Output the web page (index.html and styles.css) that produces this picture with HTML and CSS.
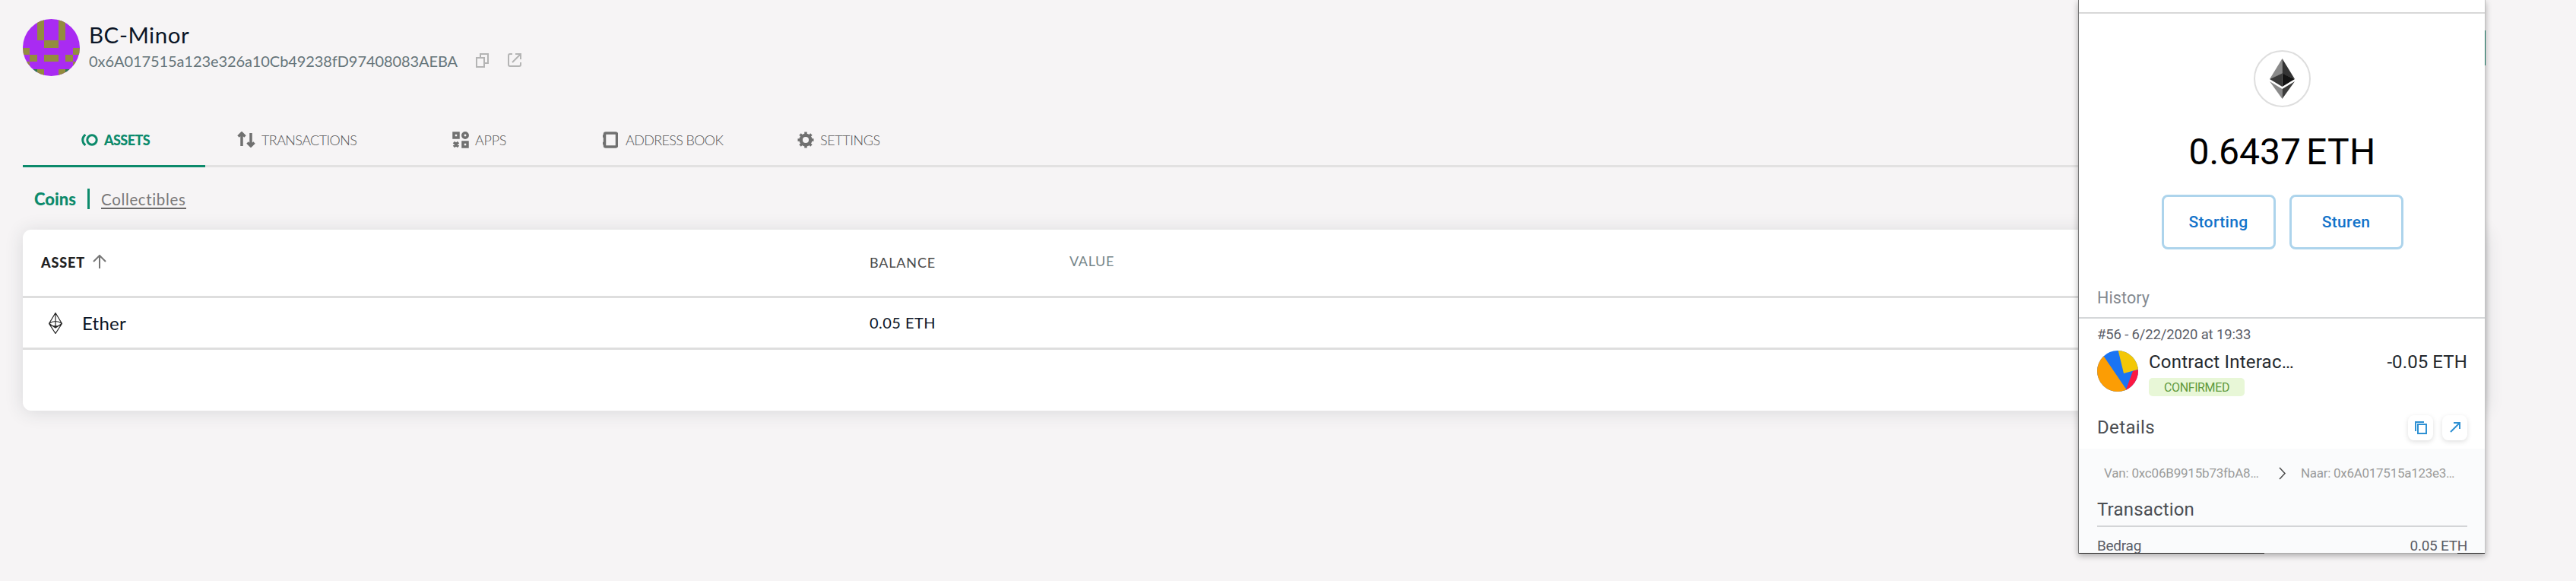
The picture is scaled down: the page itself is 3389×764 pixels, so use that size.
FILE: index.html
```html
<!DOCTYPE html>
<html lang="nl">
<head>
<meta charset="utf-8">
<title>BC-Minor</title>
<link rel="stylesheet" href="styles.css">
</head>
<body>
<main class="page">
  <header class="account">
    <svg class="avatar" viewBox="0 0 8 8"><defs><clipPath id="round"><circle cx="4" cy="4" r="4"/></clipPath></defs><g clip-path="url(#round)" shape-rendering="crispEdges"><path fill="#a92bf2" d="M0 0h8v8H0z"/><path fill="#938c3e" d="M2 0h1v3H2zM5 0h1v3H5zM3 3h2v1H3zM0 4h1v1H0zM7 4h1v1H7zM1 5h1v1H1zM3 5h2v1H3zM6 5h1v1H6zM0 6h1v1H0zM7 6h1v1H7zM2 7h1v1H2zM5 7h1v1H5z"/><path fill="#2f7b4c" d="M0 7h2v1H0zM6 7h2v1H6z"/></g></svg>
    <div class="identity">
      <div class="name">BC-Minor</div>
      <div class="address"><span class="hash">0x6A017515a123e326a10Cb49238fD97408083AEBA</span>
        <svg class="copy" viewBox="0 0 17 19"><path d="M6 5V1h10v12h-4M1 6h10v12H1z"/></svg>
        <svg class="open" viewBox="0 0 18 18"><path d="M6 1H3Q1 1 1 3v12q0 2 2 2h12q2 0 2-2v-3M10 1h7v7M16 2L6 12"/></svg>
      </div>
    </div>
  </header>
  <nav class="tabs">
    <a class="tab active"><svg width="22" height="16" viewBox="0 0 22 16"><path d="M5.500 1.200C0.500 4.500 0.500 11.500 5.500 14.800"/><circle cx="14" cy="8" r="6.200"/></svg><span class="t1">ASSETS</span></a>
    <a class="tab second"><svg width="24" height="21" viewBox="0 0 24 21"><path d="M6 19V2M1.500 6.500L6 2l4.500 4.500M18 2v17M13.500 14.500L18 19l4.500-4.500"/></svg><span class="t2">TRANSACTIONS</span></a>
    <a class="tab third"><svg width="22" height="22" viewBox="0 0 22 22"><path d="M2 2h6v6H2zM14 14h6v6h-6zM2 14l6 6M8 14l-6 6"/><circle cx="17" cy="5" r="3.200"/></svg><span class="t3">APPS</span></a>
    <a class="tab fourth"><svg width="20" height="22" viewBox="0 0 20 22"><path d="M4 2h13q1.500 0 1.500 1.500v15q0 1.500-1.500 1.500H4q-1.500 0-1.500-1.500v-15Q2.500 2 4 2zM0 6h4M0 15.500h4"/></svg><span class="t4">ADDRESS BOOK</span></a>
    <a class="tab fifth"><svg width="22" height="22" viewBox="0 0 22 22"><circle class="ring" cx="11" cy="11" r="6.300"/><path class="teeth" d="M11 .500V4M11 18v3.500M.500 11H4M18 11h3.500M3.600 3.600L6 6M16 16l2.400 2.400M3.600 18.400L6 16M16 6l2.400-2.400"/></svg><span class="t5">SETTINGS</span></a>
  </nav>
  <div class="switch"><b class="coins">Coins</b><i class="bar"></i><a class="collect">Collectibles</a></div>
  <section class="card">
    <div class="row head">
      <div class="c1"><b class="asset">ASSET</b><svg width="18" height="18" viewBox="0 0 18 18"><path d="M9 18V1.500M1 9l8-8 8 8"/></svg></div>
      <div class="c2"><span class="balance">BALANCE</span></div>
      <div class="c3"><span class="value">VALUE</span></div>
    </div>
    <div class="row coin">
      <div class="c1"><svg class="ether" viewBox="0 0 18 28"><path d="M9 .500L17.500 14.500 9 27.500.500 14.500zM9 .500V20M.500 14.500Q9 8.500 17.500 14.500L9 20 .500 14.500M.500 14.500Q9 22 17.500 14.500"/></svg><span class="ethname">Ether</span></div>
      <div class="c2"><span class="amount">0.05 ETH</span></div>
    </div>
  </section>
</main>
<aside class="popup">
  <div class="topbar"></div>
  <div class="summary">
    <div class="token"><svg width="33" height="53" viewBox="0 0 33 53"><path fill="#8a8a8a" d="M16.500 0v20L0 27z"/><path fill="#343434" d="M16.500 0v20L33 27z"/><path fill="#393939" d="M16.500 19.500V37L0 27z"/><path fill="#141414" d="M16.500 19.500V37L33 27z"/><path fill="#8a8a8a" d="M0 30l16.500 10v13z"/><path fill="#3c3c3b" d="M33 30L16.500 40v13z"/></svg></div>
    <div class="total"><span class="num">0.6437</span><span class="unit">ETH</span></div>
    <div class="actions"><button>Storting</button><button>Sturen</button></div>
  </div>
  <div class="history">History</div>
  <div class="tx">
    <div class="date">#56 - 6/22/2020 at 19:33</div>
    <div class="txrow">
      <svg class="blockie" viewBox="0 0 54 54"><defs><clipPath id="disc"><circle cx="27" cy="27" r="27"/></clipPath></defs><g clip-path="url(#disc)"><path fill="#1a74f3" d="M0 0h54v54H0z"/><path fill="#fc9d04" d="M-2-5L9 8 39 52 36 60H-5z"/><path fill="#f3c706" d="M27-3l8 33 22-6V-3z"/><path fill="#fb1942" d="M47 27l10-3v30H37z"/></g></svg>
      <div class="what"><span class="contract">Contract Interac…</span><span class="badge">CONFIRMED</span></div>
      <span class="minus">-0.05 ETH</span>
    </div>
  </div>
  <div class="details"><span class="det">Details</span>
    <div class="tools"><i class="tool"><svg width="16" height="17" viewBox="0 0 16 17"><path d="M4 4h11v12H4zM1 13V1h11"/></svg></i><i class="tool"><svg width="14" height="14" viewBox="0 0 14 14"><path d="M1 13L13 1M5 1h8v8"/></svg></i></div>
  </div>
  <div class="panel">
    <div class="parties"><span class="from">Van: 0xc06B9915b73fbA8…</span><svg width="10" height="17" viewBox="0 0 10 17"><path d="M1 1l7 7.500L1 16"/></svg><span class="to">Naar: 0x6A017515a123e3…</span></div>
    <div class="section">Transaction</div>
    <div class="line"><span class="bed">Bedrag</span><span class="am">0.05 ETH</span></div>
  </div>
  <div class="edge"></div>
</aside>
</body>
</html>
```
FILE: styles.css
```css
* { box-sizing: border-box; }
body { margin: 0; width: 3389px; height: 764px; overflow: hidden; position: relative; background: #f6f4f5; font-family: Lato, "Open Sans", sans-serif; }
svg { display: block; flex: none; fill: none; }
span, b, a { white-space: nowrap; }
.page { padding: 25px 119px 0 30px; }
.account { display: flex; height: 125px; }
.avatar { width: 75px; height: 75px; }
.identity { padding: 4px 0 0 12px; }
.name { font-size: 29.5px; line-height: 34px; letter-spacing: .55px; color: #0b1526; }
.address { display: flex; align-items: center; height: 34px; font-size: 20px; letter-spacing: -.08px; color: #66757a; }
.hash { width: 509px; }
.copy { width: 17px; height: 19px; margin: 0 25px 2px 0; stroke: #b4b4b4; stroke-width: 2; }
.open { width: 18px; height: 18px; margin-bottom: 2px; stroke: #b4b4b4; stroke-width: 2; }
.tabs { display: flex; height: 70px; border-bottom: 3px solid #e2e1e1; }
.tab { display: flex; align-items: center; width: 240px; height: 70px; border-bottom: 3px solid transparent; font-size: 18px; font-weight: 300; color: #555; gap: 8px; }
.tab svg { stroke: #707070; stroke-width: 3.5; }
.tab.active { color: #0c8a6b; border-color: #0c8a6b; font-weight: 900; padding-left: 77px; }
.tab.active svg { stroke: #0c8a6b; stroke-width: 3; }
.t1 { letter-spacing: -.6px; }
.t2 { letter-spacing: -.6px; }
.t3 { letter-spacing: -.25px; }
.t4 { letter-spacing: -.65px; }
.t5 { letter-spacing: -.4px; }
.second { padding-left: 42px; }
.third { padding-left: 85px; }
.fourth { padding-left: 43px; gap: 10px; }
.fifth { padding-left: 59px; }
.tab .ring { stroke-width: 4.5; }
.switch { display: flex; align-items: center; height: 27px; margin: 28px 0 27px; padding-left: 15px; }
.coins { width: 70px; font-size: 22px; color: #0c8a6b; font-weight: 900; }
.bar { width: 3px; height: 27px; background: #0c8a6b; margin-right: 15px; }
.collect { margin-top: 2px; font-size: 20.5px; letter-spacing: .65px; color: #7a7878; line-height: 22px; border-bottom: 2px solid #6a6868; }
.card { height: 238px; background: #fff; border-radius: 11px; box-shadow: 0 2px 24px rgba(40,54,61,.14); }
.row { display: flex; border-bottom: 3px solid #dedede; }
.head { height: 90px; font-size: 18px; }
.coin { height: 68px; color: #0b1526; }
.row > div { display: flex; align-items: center; height: 100%; }
.c1 { width: 1114px; padding-left: 24px; }
.c2 { width: 263px; }
.head .c1, .head .c2 { padding-bottom: 1px; }
.asset { color: #212121; width: 68px; font-weight: 900; letter-spacing: .86px; }
.head svg { stroke: #757575; stroke-width: 2; margin-bottom: 2px; }
.balance { color: #4a4a4a; letter-spacing: .82px; }
.value { color: #76868a; letter-spacing: .64px; padding-bottom: 5px; }
.ether { width: 18px; height: 28px; margin: 0 26px 0 10px; stroke: #222; stroke-width: 1.2; }
.ethname { font-size: 24px; letter-spacing: .25px; padding-bottom: 1px; }
.amount { font-size: 20px; letter-spacing: .46px; padding-bottom: 1px; }
.popup { position: absolute; left: 2734px; top: 0; width: 536px; height: 728px; overflow: hidden; background: #fff; border-left: 1px solid #777; padding-right: 1px; box-shadow: 0 3px 8px rgba(0,0,0,.3); font-family: Roboto, "Open Sans", sans-serif; }
.popup::after { content: ""; position: absolute; right: 0; top: 0; width: 1px; height: 728px; background: linear-gradient(#c0c0c0 40px, #0f6b56 40px 86px, #c4c4c4 86px); }
.topbar { height: 18px; border-bottom: 2px solid #d8d8d8; }
.summary { display: flex; flex-direction: column; align-items: center; height: 336px; padding: 48px 0 0 1px; }
.token { display: flex; align-items: center; justify-content: center; width: 75px; height: 75px; border: 2px solid #dedede; border-radius: 50%; padding-bottom: 1px; }
.total { display: flex; gap: 7px; margin-top: 30px; line-height: 58px; font-size: 48px; color: #000; }
.unit { letter-spacing: .3px; }
.actions { display: flex; gap: 18px; margin-top: 27px; }
.actions button { width: 150px; height: 72px; padding: 0; border: 3px solid #add4ec; border-radius: 8px; background: #fff; color: #1273ca; font: 500 21px/1 Roboto, sans-serif; letter-spacing: .36px; }
.history { height: 65px; padding: 28px 24px 0; font-size: 21.5px; line-height: 20px; letter-spacing: .1px; color: #84898f; border-bottom: 2px solid #d5d7d9; }
.tx { height: 96px; padding: 9px 23px 0 24px; }
.date { height: 33px; font-size: 18.5px; line-height: 24px; letter-spacing: -.15px; color: #5b5d67; }
.txrow { display: flex; align-items: flex-start; }
.blockie { width: 54px; height: 54px; margin-right: 14px; }
.what { flex: 1; }
.contract { display: block; font-size: 24px; line-height: 31px; letter-spacing: .22px; color: #24292e; }
.badge { display: flex; align-items: center; justify-content: center; width: 126px; height: 24px; margin-top: 5px; border-radius: 5px; background: #e8f7d7; color: #5f9a3d; font-size: 16px; letter-spacing: -.38px; }
.minus { font-size: 24px; line-height: 31px; letter-spacing: .1px; color: #24292e; }
.details { display: flex; align-items: center; justify-content: space-between; height: 75px; padding: 19px 23px 0 24px; font-size: 24px; line-height: 30px; letter-spacing: .36px; color: #4a4d52; }
.tools { display: flex; gap: 12px; }
.tool { display: flex; align-items: center; justify-content: center; width: 33px; height: 33px; border-radius: 8px; background: #fff; box-shadow: 0 2px 6px rgba(0,0,0,.13); }
.tool svg { stroke: #2f91d3; stroke-width: 2; }
.panel { height: 137px; overflow: hidden; background: #fafbfc; padding: 0 23px 0 24px; }
.parties { display: flex; align-items: center; height: 64px; padding: 0 0 0 9px; color: #9b9b9b; font-size: 17px; letter-spacing: -.2px; }
.parties svg { margin: 0 19px 0 26px; stroke: #4a4a4a; stroke-width: 1.5; }
.from { width: 204px; }
.to { letter-spacing: -.28px; }
.section { height: 39px; border-bottom: 2px solid #d3d5d7; font-size: 24px; line-height: 32px; letter-spacing: .18px; color: #4a4d52; }
.line { display: flex; justify-content: space-between; font-size: 19px; line-height: 50px; letter-spacing: -.28px; color: #5b5d67; }
.edge { height: 1px; background: linear-gradient(90deg, #222 0 244px, #aaa 244px 498px, #222 498px); }
```
